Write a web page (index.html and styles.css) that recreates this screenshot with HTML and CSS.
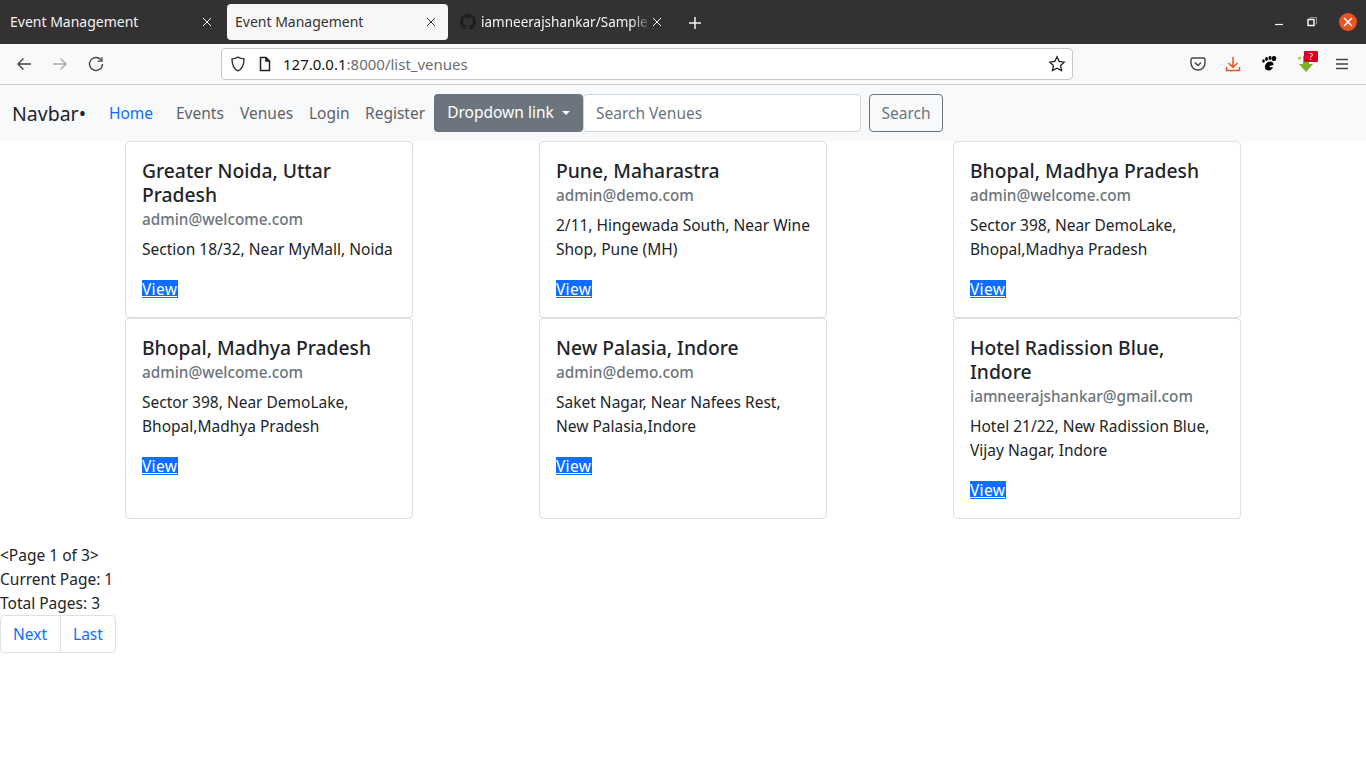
FILE: index.html
```html
<!DOCTYPE html>
<html lang="en">
  <head>
    <meta charset="UTF-8" />
    <meta name="viewport" content="width=device-width, initial-scale=1.0" />
    <title>Event Management</title>
    <link rel="stylesheet" href="styles.css">
  </head>
  <body>
    <div class="tabbar">
      <div class="tab">
        <span class="tab-title">Event Management</span>
        <svg class="tab-close" width="10" height="10" viewBox="0 0 10 10"><path d="M1 1l8 8M9 1l-8 8"/></svg>
      </div>
      <div class="tab tab-active">
        <span class="tab-title">Event Management</span>
        <svg class="tab-close" width="10" height="10" viewBox="0 0 10 10"><path d="M1 1l8 8M9 1l-8 8"/></svg>
      </div>
      <div class="tab tab-gh">
        <svg class="gh-icon" width="16" height="16" viewBox="0 0 16 16"><path d="M8 0C3.58 0 0 3.58 0 8c0 3.54 2.29 6.53 5.47 7.59.4.07.55-.17.55-.38v-1.34c-2.23.48-2.7-1.07-2.7-1.07-.36-.92-.89-1.17-.89-1.17-.73-.5.05-.49.05-.49.8.06 1.23.82 1.23.82.71 1.22 1.87.87 2.33.66.07-.52.28-.87.5-1.07-1.78-.2-3.64-.89-3.64-3.95 0-.87.31-1.59.82-2.15-.08-.2-.36-1.02.08-2.12 0 0 .67-.21 2.2.82a7.6 7.6 0 0 1 4 0c1.53-1.04 2.2-.82 2.2-.82.44 1.1.16 1.92.08 2.12.51.56.82 1.27.82 2.15 0 3.07-1.87 3.75-3.65 3.95.29.25.54.73.54 1.48v2.2c0 .21.15.46.55.38A8 8 0 0 0 16 8c0-4.42-3.58-8-8-8z"/></svg>
        <span class="tab-title tab-fade">iamneerajshankar/Sample</span>
        <svg class="tab-close" width="10" height="10" viewBox="0 0 10 10"><path d="M1 1l8 8M9 1l-8 8"/></svg>
      </div>
      <svg class="new-tab" width="14" height="14" viewBox="0 0 14 14"><path d="M7 1v12M1 7h12"/></svg>
      <div class="win-controls">
        <svg width="12" height="12" viewBox="0 0 12 12"><path d="M2 8.500h8" stroke="#fff" stroke-width="1.200"/></svg>
        <svg width="12" height="12" viewBox="0 0 12 12" fill="none"><path d="M4 2.500V1.500h6.500V8H9.500" stroke="#999"/><rect x="2" y="3.500" width="6" height="6" stroke="#fff" stroke-width="1.400"/></svg>
        <span class="win-close"><svg width="10" height="10" viewBox="0 0 10 10"><path d="M1 1l8 8M9 1l-8 8" stroke="#fff" stroke-width="1.500"/></svg></span>
      </div>
    </div>

    <div class="toolbar">
      <div class="nav-btns">
        <svg width="16" height="16" viewBox="0 0 16 16" fill="none" stroke="#444" stroke-width="1.400"><path d="M15 8H2M7.500 2.500L2 8l5.500 5.500"/></svg>
        <svg width="16" height="16" viewBox="0 0 16 16" fill="none" stroke="#aaa" stroke-width="1.400"><path d="M1 8h13M8.500 2.500L14 8l-5.500 5.500"/></svg>
        <svg width="16" height="16" viewBox="0 0 16 16" fill="none" stroke="#444" stroke-width="1.400"><path d="M13.500 4.500A6.500 6.500 0 1 0 14.500 8"/><path d="M14 1v4.200H9.800" stroke-width="1.200"/></svg>
      </div>
      <div class="urlbar">
        <svg class="url-shield" width="16" height="16" viewBox="0 0 16 16" fill="none" stroke="#333" stroke-width="1.400"><path d="M8 1.200c2 1.200 3.800 1.600 6 1.700 0 5-1 9.500-6 11.900C3 12.400 2 7.900 2 2.900c2.200-.1 4-.5 6-1.700z"/></svg>
        <svg class="url-doc" width="14" height="16" viewBox="0 0 14 16" fill="none" stroke="#222" stroke-width="1.500"><path d="M2.500 1.500h5.500l3.500 3.500v9.500h-9z"/><path d="M8 1.500V5h3.500" fill="#222"/></svg>
        <span class="url-host">127.0.0.1</span><span class="url-path">:8000/list_venues</span>
        <svg class="url-star" width="18" height="18" viewBox="0 0 18 18" fill="none" stroke="#222" stroke-width="1.300"><path d="M9 1.800l2.200 4.600 5 .7-3.600 3.500.9 5L9 13.200l-4.500 2.400.9-5L1.800 7.100l5-.7z"/></svg>
      </div>
      <div class="ext-icons">
        <svg width="16" height="16" viewBox="0 0 16 16" fill="none" stroke="#444" stroke-width="1.400"><path d="M2.500 2h11c.8 0 1.500.7 1.500 1.500V7a7 7 0 0 1-14 0V3.500C1 2.700 1.700 2 2.500 2z"/><path d="M5 6.500L8 9.500l3-3"/></svg>
        <svg width="16" height="16" viewBox="0 0 16 16" fill="none" stroke="#e9531f" stroke-width="1.500"><path d="M8 1v10M3.500 7L8 11.500 12.500 7M1.500 11v3.500h13V11"/></svg>
        <svg width="18" height="18" viewBox="0 0 18 18" fill="#000"><ellipse cx="3.500" cy="6" rx="1.300" ry="1.700"/><ellipse cx="6.500" cy="4" rx="1.400" ry="1.900"/><ellipse cx="10" cy="3" rx="1.600" ry="2"/><ellipse cx="14" cy="3.500" rx="2.300" ry="2.600"/><path d="M8 7c3-1.500 6 .5 5.500 2.500-.8 1.500-3.500.5-4 1.800-.3 1 2 1.200 3.500 1-1 3-5 4-7 2.500C4 13 4.500 9 8 7z"/></svg>
        <span class="ext-green">
          <svg width="20" height="20" viewBox="0 0 20 20"><path d="M7 2h6v8h4l-7 8-7-8h4z" fill="#7cb229"/><path d="M2 3h3v2.500H2z" fill="#a5d257"/></svg>
          <span class="ext-badge">?</span>
        </span>
        <svg width="16" height="16" viewBox="0 0 16 16" fill="none" stroke="#444" stroke-width="1.300"><path d="M2 3.500h12M2 8h12M2 12.500h12"/></svg>
      </div>
    </div>

    <nav class="navbar">
      <a class="brand">Navbar&#8226;</a>
      <a class="nav-link nav-home">Home</a>
      <a class="nav-link nav-events">Events</a>
      <a class="nav-link nav-venues">Venues</a>
      <a class="nav-link nav-login">Login</a>
      <a class="nav-link nav-register">Register</a>
      <button class="dropdown">Dropdown link<span class="caret"></span></button>
      <form class="search">
        <input class="search-input" type="text" placeholder="Search Venues">
        <button class="search-btn" type="button">Search</button>
      </form>
    </nav>

    <div class="venues">
      <div class="card">
        <h5>Greater Noida, Uttar Pradesh</h5>
        <h6>admin@welcome.com</h6>
        <p>Section 18/32, Near MyMall, Noida</p>
        <a class="view" href="#">View</a>
      </div>
      <div class="card">
        <h5>Pune, Maharastra</h5>
        <h6>admin@demo.com</h6>
        <p>2/11, Hingewada South, Near Wine Shop, Pune (MH)</p>
        <a class="view" href="#">View</a>
      </div>
      <div class="card">
        <h5>Bhopal, Madhya Pradesh</h5>
        <h6>admin@welcome.com</h6>
        <p>Sector 398, Near DemoLake, Bhopal,Madhya Pradesh</p>
        <a class="view" href="#">View</a>
      </div>
      <div class="card">
        <h5>Bhopal, Madhya Pradesh</h5>
        <h6>admin@welcome.com</h6>
        <p>Sector 398, Near DemoLake, Bhopal,Madhya Pradesh</p>
        <a class="view" href="#">View</a>
      </div>
      <div class="card">
        <h5>New Palasia, Indore</h5>
        <h6>admin@demo.com</h6>
        <p>Saket Nagar, Near Nafees Rest, New Palasia,Indore</p>
        <a class="view" href="#">View</a>
      </div>
      <div class="card">
        <h5>Hotel Radission Blue, Indore</h5>
        <h6>iamneerajshankar@gmail.com</h6>
        <p>Hotel 21/22, New Radission Blue, Vijay Nagar, Indore</p>
        <a class="view" href="#">View</a>
      </div>
    </div>

    <div class="paging">
      <div>&lt;Page 1 of 3&gt;</div>
      <div>Current Page: 1</div>
      <div>Total Pages: 3</div>
      <ul class="pagination">
        <li><a href="#">Next</a></li>
        <li><a href="#">Last</a></li>
      </ul>
    </div>
  </body>
</html>
```

FILE: styles.css
```css
* {
  box-sizing: border-box;
}
body {
  margin: 0;
  background: #fff;
  color: #212529;
  font-family: "Noto Sans", sans-serif;
  font-size: 15.5px;
  line-height: 24px;
  overflow: hidden;
}
a {
  text-decoration: none;
}

/* browser chrome */
.tabbar {
  height: 44px;
  background: #333131;
  display: flex;
  align-items: flex-start;
  padding-top: 4px;
  color: #f4f4f4;
  font-size: 14px;
}
.tab {
  width: 227px;
  height: 36px;
  padding: 0 15px 0 10px;
  display: flex;
  align-items: center;
  justify-content: space-between;
  flex-shrink: 0;
}
.tab-active {
  width: 221px;
  margin-right: 1px;
  padding: 0 12px 0 8px;
  background: #f7f7f7;
  color: #333;
  border-radius: 4px;
}
.tab-gh {
  width: 221px;
  padding: 0 8px 0 11px;
}
.tab-close path {
  stroke: currentColor;
  stroke-width: 1;
  fill: none;
}
.gh-icon {
  fill: #1f1d1d;
  flex-shrink: 0;
  margin-right: 5px;
}
.tab-fade {
  font-size: 13.5px;
  white-space: nowrap;
  overflow: hidden;
  width: 171px;
  flex-shrink: 0;
  -webkit-mask-image: linear-gradient(to right, #000 88%, transparent 100%);
  mask-image: linear-gradient(to right, #000 88%, transparent 100%);
}
.new-tab {
  margin: 12px 0 0 18px;
}
.new-tab path {
  stroke: #f4f4f4;
  stroke-width: 1.5;
}
.win-controls {
  margin-left: auto;
  margin-right: 9px;
  margin-top: 9px;
  display: flex;
  align-items: center;
  gap: 21px;
}
.win-close {
  width: 18px;
  height: 18px;
  border-radius: 50%;
  background: #e95420;
  display: flex;
  align-items: center;
  justify-content: center;
}

.toolbar {
  height: 41px;
  background: #f9f9fa;
  border-bottom: 1px solid #ccc;
  display: flex;
  align-items: center;
  padding-left: 16px;
}
.nav-btns {
  display: flex;
  gap: 20px;
  width: 205px;
}
.urlbar {
  width: 852px;
  height: 32px;
  background: #fff;
  border: 1px solid #c8c8c8;
  border-radius: 4px;
  display: flex;
  align-items: center;
  padding: 0 6px 0 8px;
  font-size: 15px;
}
.url-doc {
  margin: 0 11px 0 12px;
}
.url-host {
  color: #15141a;
}
.url-path {
  color: #6d6d6d;
}
.url-star {
  margin-left: auto;
}
.ext-icons {
  flex: 1;
  display: flex;
  align-items: center;
  gap: 19px;
  padding-left: 117px;
}
.ext-green {
  position: relative;
  display: flex;
  margin: 0 -1px;
}
.ext-badge {
  position: absolute;
  top: -3px;
  left: 8px;
  width: 14px;
  height: 11px;
  background: #d70022;
  color: #fff;
  border-radius: 1px;
  font-size: 9px;
  line-height: 11px;
  text-align: center;
}

/* page navbar */
.navbar {
  height: 56px;
  background: #f8f9fa;
  display: flex;
  align-items: center;
  padding-left: 12px;
}
.brand {
  font-size: 19.5px;
  color: #212529;
  width: 97px;
  margin-top: 1px;
}
.nav-link {
  color: #5f6468;
  margin-top: -1px;
}
.nav-home {
  color: #0d6efd;
  width: 67px;
}
.nav-events {
  width: 64px;
}
.nav-venues {
  width: 69px;
}
.nav-login {
  width: 56px;
}
.nav-register {
  width: 69px;
}
.dropdown {
  width: 149px;
  height: 38px;
  margin-top: -1px;
  border: 0;
  border-radius: 4px;
  background: #6c757d;
  color: #fff;
  font: inherit;
  padding: 0 0 1px;
}
.caret {
  display: inline-block;
  margin-left: 8px;
  vertical-align: 3px;
  border-top: 4.8px solid #fff;
  border-left: 4.8px solid transparent;
  border-right: 4.8px solid transparent;
}
.search {
  display: flex;
  gap: 8px;
}
.search-input {
  width: 278px;
  height: 38px;
  border: 1px solid #ced4da;
  border-radius: 4px;
  padding: 0 12px;
  font: inherit;
  background: #fff;
}
.search-input::placeholder {
  color: #6c757d;
  opacity: 1;
}
.search-btn {
  width: 74px;
  height: 38px;
  border: 1px solid #6c757d;
  border-radius: 4px;
  background: transparent;
  color: #6c757d;
  font: inherit;
  padding: 0;
}

/* cards */
.venues {
  display: grid;
  grid-template-columns: repeat(3, 288px);
  column-gap: 126px;
  padding-left: 125px;
}
.card {
  border: 1px solid #dfdfdf;
  border-radius: 4px;
  padding: 17px 16px 16px;
}
.card h5 {
  margin: 0;
  font-size: 19.3px;
  font-weight: 500;
  line-height: 24px;
}
.card h6 {
  margin: 0 0 6px;
  font-size: 15.3px;
  font-weight: 500;
  line-height: 24px;
  color: #6c757d;
}
.card p {
  margin: 0 0 19px;
}
.view {
  display: block;
  width: 36px;
  height: 18px;
  margin-bottom: 3px;
  background: #0d6efd;
  color: #fff;
  line-height: 18px;
  letter-spacing: 0.3px;
  text-decoration: underline;
}

/* pagination */
.paging {
  margin-top: 24px;
}
.pagination {
  list-style: none;
  margin: 0;
  padding: 0;
  display: flex;
}
.pagination a {
  display: block;
  height: 38px;
  padding: 6px 12px;
  border: 1px solid #dee2e6;
  color: #0d6efd;
}
.pagination li:first-child a {
  padding-right: 13px;
  border-radius: 4px 0 0 4px;
}
.pagination li + li a {
  margin-left: -1px;
  border-radius: 0 4px 4px 0;
}
```
